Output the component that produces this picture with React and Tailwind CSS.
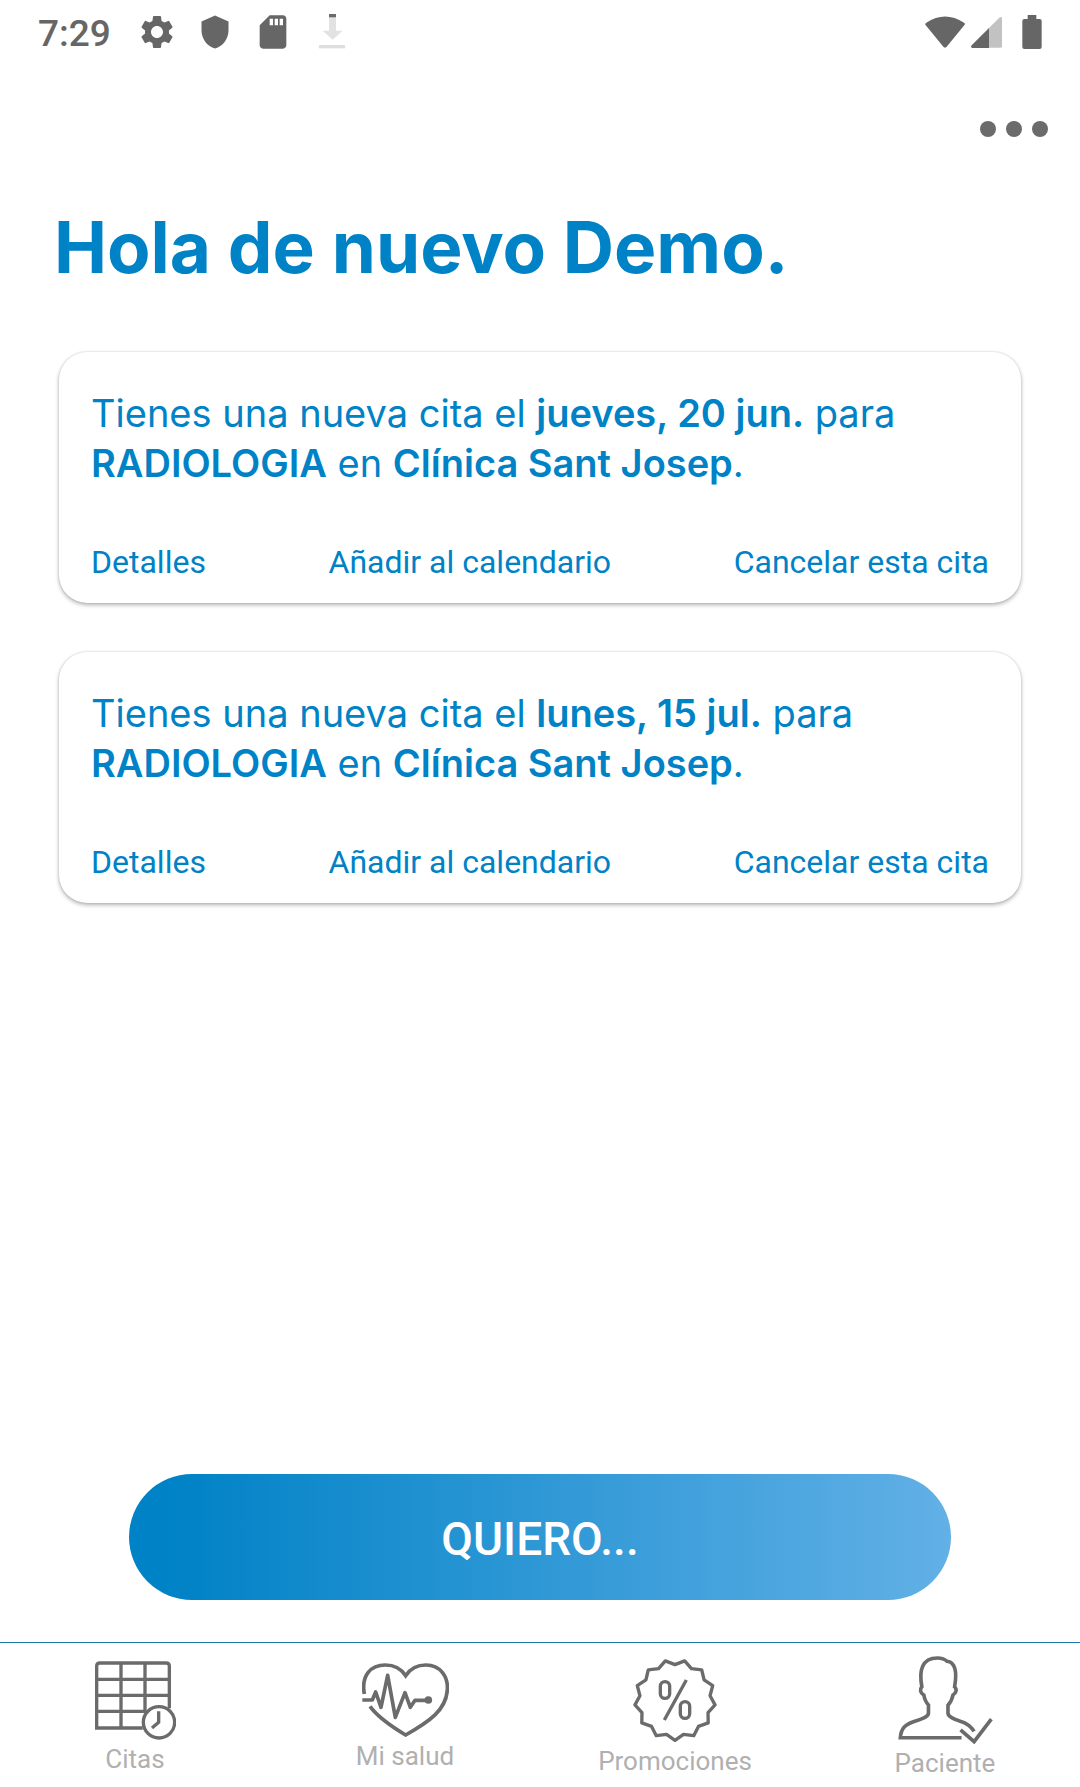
import React from "react";
import { MdSettings, MdShield, MdSdCard } from "react-icons/md";

const appointments = [
  { id: 1, date: "jueves, 20 jun.", service: "RADIOLOGIA", clinic: "Clínica Sant Josep" },
  { id: 2, date: "lunes, 15 jul.", service: "RADIOLOGIA", clinic: "Clínica Sant Josep" },
];

// 13-pointed seal, one point facing down
const sealPoints = Array.from({ length: 26 }, (_, i) => {
  const radius = i % 2 === 0 ? 121 : 106;
  const angle = Math.PI / 2 + (i * Math.PI) / 13;
  return `${(252 + radius * Math.cos(angle)).toFixed(1)},${(180 + radius * Math.sin(angle)).toFixed(1)}`;
}).join(" ");

function DownloadIcon() {
  return (
    <svg width="26" height="36" viewBox="954 44 78 108" aria-hidden="true">
      <path d="M984 54h21v40h20l-30 27-30-27h19z" fill="#e2e2e2" />
      <path d="M984 44h21v10h-21z" fill="#6b6b6b" />
      <path d="M954 137h78v10h-78z" fill="#dedede" />
    </svg>
  );
}

function WifiIcon() {
  return (
    <svg width="40" height="32" viewBox="133 42 120 96" fill="#666" aria-hidden="true">
      <path d="M134 68q-1-4 3-6q56-37 113 0q4 2 2 6l-54 66q-5 5-10 0z" />
    </svg>
  );
}

function SignalIcon() {
  return (
    <svg width="31" height="32" viewBox="273 45 93 96" aria-hidden="true">
      <path d="M327 81l31-31q8-5 8 3v83q0 4-4 4h-35z" fill="#c2c2c2" />
      <path d="M327 81v60h-50q-7-2-2-8z" fill="#666" />
    </svg>
  );
}

function BatteryIcon() {
  return (
    <svg width="20" height="34" viewBox="425 42 60 102" fill="#666" aria-hidden="true">
      <path d="M442 42h26v12h10q6 0 6 6v78q0 6-6 6h-46q-6 0-6-6V60q0-6 6-6h10z" />
    </svg>
  );
}

function CalendarIcon() {
  return (
    <svg width="81" height="79" viewBox="102 62 243 237" fill="none" stroke="#6b6b6b" strokeWidth="10" aria-hidden="true">
      <path d="M245 263H107V77q0-9 10-9h198q10 0 10 9v127" />
      <path d="M107 117h218M107 165h218M107 213h148M180 67v196M252 67v146" />
      <circle cx="294" cy="246" r="47" fill="#fff" />
      <path d="M293 213v33l-20 17" />
    </svg>
  );
}

function HeartIcon() {
  return (
    <svg width="87" height="74" viewBox="93 68 261 222" fill="none" stroke="#6b6b6b" strokeWidth="11" aria-hidden="true">
      <path d="M100 161C90 104 120 74 163 74c27 0 48 12 61 32c13-20 34-32 61-32c42 0 67 34 64 75c-4 60-53 94-125 135c-48-29-84-54-107-86" />
      <path d="M94 179h30l10-24l16 46l20-96l23 126l29-74l16 44l14-21h32" strokeLinejoin="round" />
      <circle cx="292" cy="179" r="6" fill="#6b6b6b" />
    </svg>
  );
}

function PromoIcon() {
  return (
    <svg width="84" height="84" viewBox="126 54 252 252" fill="none" stroke="#6b6b6b" strokeWidth="10" aria-hidden="true">
      <polygon points={sealPoints} strokeLinejoin="round" />
      <rect x="208" y="125" width="28" height="50" rx="14" />
      <rect x="268" y="185" width="28" height="50" rx="14" />
      <path d="M286 120L220 240" />
    </svg>
  );
}

function PatientIcon() {
  return (
    <svg width="95" height="88" viewBox="80 47 285 266" fill="none" stroke="#6b6b6b" strokeWidth="11" aria-hidden="true">
      <path d="M271 294H86c2-29 15-41 44-50c32-10 41-16 41-25v-24c-9-9-12-19-14-30c-11-6-13-17-6-25c-9-49 0-87 47-87c13 0 22 3 29 10c25 3 31 31 23 77c8 8 5 19-5 25c-2 12-7 22-15 31v23c0 10 12 16 37 25c20 6 33 16 42 31" />
      <path d="M268 270l41 36l52-68" />
    </svg>
  );
}

const tabs = [
  { label: "Citas", Icon: CalendarIcon },
  { label: "Mi salud", Icon: HeartIcon },
  { label: "Promociones", Icon: PromoIcon },
  { label: "Paciente", Icon: PatientIcon },
];

function StatusBar() {
  return (
    <div className="flex h-16 items-center justify-between px-[38px] text-[#666]">
      <div className="flex items-center">
        <span className="pt-1 text-[37px] leading-10 font-medium">7:29</span>
        <MdSettings size={40} className="ml-[26px]" />
        <MdShield size={36} className="ml-5" />
        <MdSdCard size={40} className="ml-5" />
        <span className="ml-[26px]">
          <DownloadIcon />
        </span>
      </div>
      <div className="flex items-center">
        <WifiIcon />
        <span className="ml-1.5">
          <SignalIcon />
        </span>
        <span className="ml-5">
          <BatteryIcon />
        </span>
      </div>
    </div>
  );
}

function AppointmentCard({ date, service, clinic }) {
  return (
    <article className="rounded-[28px] bg-white px-8 pt-9 pb-[21px] shadow-[0_2px_4px_rgba(0,0,0,0.3),0_0_2px_rgba(0,0,0,0.15)]">
      <p className="font-[Inter,sans-serif] text-[38px] leading-[50px]">
        Tienes una nueva cita el <b className="font-semibold">{date}</b> para{" "}
        <b className="font-semibold">{service}</b> en <b className="font-semibold">{clinic}</b>.
      </p>
      <div className="mt-[54px] flex justify-between text-[32px] leading-10">
        <button>Detalles</button>
        <button>Añadir al calendario</button>
        <button>Cancelar esta cita</button>
      </div>
    </article>
  );
}

export default function App() {
  return (
    <div className="flex min-h-screen flex-col bg-white font-[Roboto,sans-serif] text-[#0082c6]">
      <StatusBar />

      <div className="flex justify-end px-8 pt-[57px]">
        <button aria-label="Más opciones" className="flex gap-2.5">
          <span className="size-4 rounded-full bg-[#6b6b6b]" />
          <span className="size-4 rounded-full bg-[#6b6b6b]" />
          <span className="size-4 rounded-full bg-[#6b6b6b]" />
        </button>
      </div>

      <main className="flex flex-1 flex-col">
        <h1 className="px-[54px] pt-[66px] font-[Inter,sans-serif] text-[71px] leading-[88px] font-bold">
          Hola de nuevo Demo.
        </h1>

        <section className="mt-[61px] flex flex-col gap-[49px] px-[59px]">
          {appointments.map((item) => (
            <AppointmentCard key={item.id} {...item} />
          ))}
        </section>

        <div className="mt-auto px-[129px] pb-[42px]">
          <button className="h-[126px] w-full rounded-full bg-linear-to-r/srgb from-[#0082c6] from-5% to-[#62b0e6] pt-1 text-[46px] font-medium text-white">
            QUIERO...
          </button>
        </div>
      </main>

      <nav className="grid h-[145px] grid-cols-4 border-t border-[#1f78ab]">
        {tabs.map(({ label, Icon }) => (
          <a key={label} href="#" className="flex flex-col items-center justify-center gap-1 pt-1 text-[26px] leading-[30px] text-[#b0b0b0]">
            <Icon />
            {label}
          </a>
        ))}
      </nav>
    </div>
  );
}
